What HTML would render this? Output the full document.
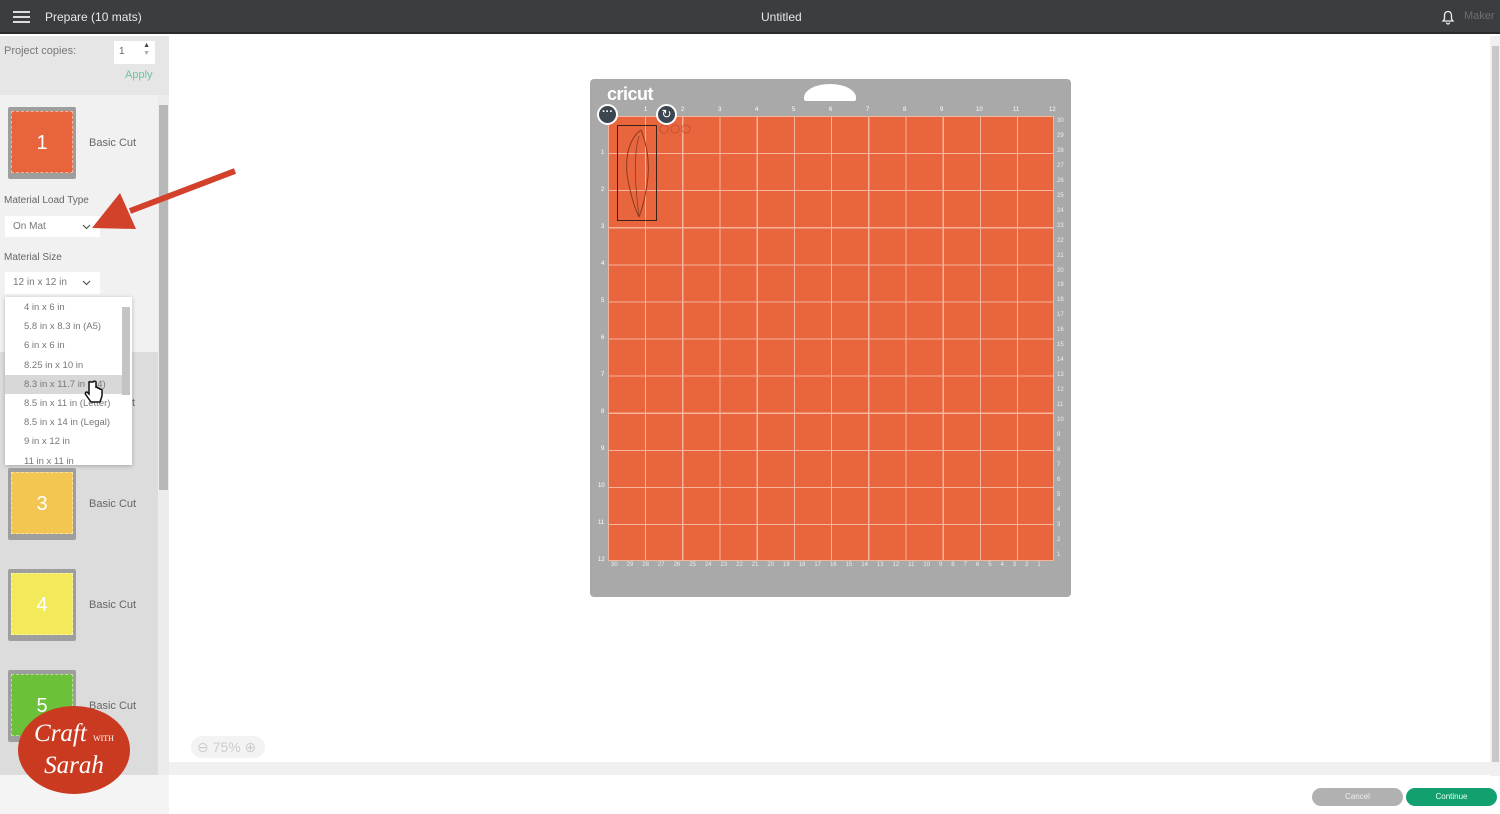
<!DOCTYPE html>
<html><head><meta charset="utf-8"><style>
*{margin:0;padding:0;box-sizing:border-box}
body{width:1500px;height:814px;overflow:hidden;background:#fff;font-family:"Liberation Sans",sans-serif;position:relative}
.abs{position:absolute}
.top{left:0;top:0;width:1500px;height:34px;background:#3b3d40;border-bottom:2px solid #2a2b2d}
.t{color:#e8e8e8;font-size:12px}
.side{left:0;top:36px;width:169px;height:739px;background:#dcdcdc}
.lbl{font-size:10px;color:#666}
.mat{width:68px;height:72px;background:#9e9e9e;border-radius:2px}
.mat .in{position:absolute;left:3px;top:4px;right:3px;bottom:6px;color:#fff;font-size:20px;text-align:center;line-height:62px;border:1px dashed rgba(255,255,255,.5)}
.bc{font-size:11px;color:#666}
.dd{background:#fff;font-size:9.5px;color:#777}
.dd .o{height:19.2px;line-height:19px;padding-left:19px}
.grid{left:608px;top:116px;width:446px;height:445px;background-color:#e8653d;
background-image:repeating-linear-gradient(90deg,transparent 0 36px,#f6b49c 36px 37.2px),repeating-linear-gradient(180deg,transparent 0 36px,#f6b49c 36px 37.1px);border:1px solid #f6b49c}
.num{font-size:6px;color:#fff;white-space:nowrap}
.row{display:flex;justify-content:space-between}
</style></head><body>
<div class="abs top">
 <div class="abs" style="left:13px;top:11px;width:17px;height:2px;background:#ddd;box-shadow:0 5px 0 #ddd,0 10px 0 #ddd"></div>
 <div class="abs t" style="left:45px;top:10px">Prepare (10 mats)</div>
 <div class="abs t" style="left:761px;top:10px">Untitled</div>
 <svg class="abs" style="left:1441px;top:10px" width="14" height="15" viewBox="0 0 14 15"><path d="M7 1.5C4.5 1.5 3.5 3.5 3.5 6v3L2 11h10l-1.5-2V6C10.5 3.5 9.5 1.5 7 1.5zM5.5 12.5a1.5 1.5 0 0 0 3 0" fill="none" stroke="#eee" stroke-width="1.3"/></svg>
 <div class="abs" style="left:1464px;top:10px;font-size:11px;color:#6d6f72">Maker</div>
</div>
<div class="abs side"></div>
<div class="abs" style="left:0;top:36px;width:169px;height:59px;background:#e6e6e6"></div>
<div class="abs lbl" style="left:4px;top:45px;font-size:11px;color:#777">Project copies:</div>
<div class="abs" style="left:114px;top:41px;width:41px;height:23px;background:#fff;font-size:10px;color:#666;padding:5px 5px">1<span style="position:absolute;right:5px;top:1px;font-size:7px;line-height:8px;color:#444">▲<br><span style="color:#aaa">▼</span></span></div>
<div class="abs" style="left:125px;top:69px;font-size:11px;color:#6fc3a0">Apply</div>
<div class="abs" style="left:0;top:95px;width:158px;height:257px;background:#f1f1f1"></div>
<div class="abs" style="left:158px;top:95px;width:11px;height:680px;background:#ececec"></div>
<div class="abs" style="left:159px;top:105px;width:9px;height:385px;background:#b8b8b8"></div>
<div class="abs mat" style="left:8px;top:107px"><div class="in" style="background:#e8643c">1</div></div>
<div class="abs bc" style="left:89px;top:137px">Basic Cut</div>
<div class="abs lbl" style="left:4px;top:195px">Material Load Type</div>
<div class="abs dd" style="left:5px;top:216px;width:95px;height:21px;padding:5px 8px;font-size:10px">On Mat<svg style="position:absolute;right:9px;top:8px" width="9" height="6" viewBox="0 0 9 6"><path d="M1 1l3.5 3.5L8 1" fill="none" stroke="#555" stroke-width="1.2"/></svg></div>
<div class="abs lbl" style="left:4px;top:252px">Material Size</div>
<div class="abs dd" style="left:5px;top:272px;width:95px;height:22px;padding:5px 8px;font-size:10px">12 in x 12 in<svg style="position:absolute;right:9px;top:8px" width="9" height="6" viewBox="0 0 9 6"><path d="M1 1l3.5 3.5L8 1" fill="none" stroke="#555" stroke-width="1.2"/></svg></div>
<div class="abs dd" style="left:5px;top:297px;width:127px;height:168px;box-shadow:0 1px 4px rgba(0,0,0,.25);padding-top:1px;overflow:hidden">
 <div class="o">4 in x 6 in</div><div class="o">5.8 in x 8.3 in (A5)</div><div class="o">6 in x 6 in</div><div class="o">8.25 in x 10 in</div>
 <div class="o" style="background:#d8d8d8;margin-right:10px">8.3 in x 11.7 in (A4)</div><div class="o">8.5 in x 11 in (Letter)</div><div class="o">8.5 in x 14 in (Legal)</div><div class="o">9 in x 12 in</div><div class="o">11 in x 11 in</div>
 <span class="abs" style="left:117px;top:10px;width:8px;height:88px;background:#c4c4c4"></span>
</div>
<svg class="abs" style="left:84px;top:380px" width="20" height="26" viewBox="0 0 20 26"><path d="M5 2v12l-2-2c-2 0-2 2-1 3l5 7h9l2-6v-6c0-1-2-1-2 0v-1c0-1-2-1-2 0v-1c0-1-2-1-2 0V2c0-1-3-1-3 0z" fill="#fff" stroke="#111" stroke-width="1.5"/></svg>
<div class="abs bc" style="left:132px;top:397px">t</div>
<div class="abs mat" style="left:8px;top:468px"><div class="in" style="background:#f2c650">3</div></div>
<div class="abs bc" style="left:89px;top:498px">Basic Cut</div>
<div class="abs mat" style="left:8px;top:569px"><div class="in" style="background:#f2ea5a">4</div></div>
<div class="abs bc" style="left:89px;top:599px">Basic Cut</div>
<div class="abs mat" style="left:8px;top:670px"><div class="in" style="background:#6cc03a">5</div></div>
<div class="abs bc" style="left:89px;top:700px">Basic Cut</div>
<svg class="abs" style="left:90px;top:165px" width="150" height="70" viewBox="0 0 150 70"><line x1="145" y1="6" x2="40" y2="46" stroke="#d2412a" stroke-width="6"/><polygon points="2,63 30,28 46,64" fill="#d2412a"/></svg>
<div class="abs" style="left:0;top:775px;width:169px;height:39px;background:#f4f4f4"></div>
<div class="abs" style="left:18px;top:706px;width:112px;height:88px;border-radius:50%;background:#c93a20;color:#fff;font-family:'Liberation Serif',serif;font-style:italic;text-align:center;font-size:25px;line-height:27px;padding-top:14px;z-index:5">Craft <span style="font-size:8px;font-style:normal">WITH</span><br>Sarah</div>
<div class="abs" style="left:169px;top:762px;width:1321px;height:13px;background:#f0f0f0"></div>
<div class="abs" style="left:1490px;top:36px;width:10px;height:740px;background:#f0f0f0"></div>
<div class="abs" style="left:1492px;top:46px;width:7px;height:716px;background:#c8c8c8"></div>
<div class="abs" style="left:191px;top:736px;width:74px;height:22px;border-radius:11px;background:#f3f3f3;font-size:14px;color:#ccc;padding:3px 6px">⊖ 75% ⊕</div>
<!-- mat -->
<div class="abs" style="left:590px;top:79px;width:481px;height:518px;background:#a9a9a9;border-radius:4px"></div>
<div class="abs" style="left:804px;top:84px;width:52px;height:17px;background:#fff;border-radius:50% 50% 2px 2px/80% 80% 2px 2px"></div>
<div class="abs" style="left:607px;top:84px;color:#fff;font-size:18px;font-weight:bold;letter-spacing:-0.5px">cricut</div>
<div class="abs grid"></div>
<div class="abs" style="left:617px;top:125px;width:40px;height:96px;border:1.5px solid #3a2418"></div>
<svg class="abs" style="left:617px;top:126px" width="40" height="95" viewBox="0 0 40 95"><path d="M24 4c-12 8-18 30-12 55 3 14 6 24 10 32M24 4c4 10 10 30 6 55-2 12-4 22-8 32" fill="none" stroke="#8a3a22" stroke-width="1"/><path d="M22 10c-6 20-4 50 0 80" fill="none" stroke="#8a3a22" stroke-width="0.8"/></svg>
<div class="abs" style="left:659px;top:124px;width:32px;height:10px;background:radial-gradient(circle at 5px 5px,transparent 3.5px,#b34a2a 4px,transparent 4.8px) 0 0/11px 10px repeat-x"></div>
<div class="abs" style="left:597px;top:104px;width:21px;height:21px;border-radius:50%;background:#3c4650;border:2px solid #fff;color:#fff;font-size:11px;text-align:center;line-height:12px;font-weight:bold">···</div>
<div class="abs" style="left:656px;top:104px;width:21px;height:21px;border-radius:50%;background:#3c4650;border:2px solid #fff;color:#fff;font-size:12px;text-align:center;line-height:17px">↻</div>
<div class="abs num" style="left:644px;top:107px">1</div><div class="abs num" style="left:681px;top:107px">2</div><div class="abs num" style="left:718px;top:107px">3</div><div class="abs num" style="left:755px;top:107px">4</div><div class="abs num" style="left:792px;top:107px">5</div><div class="abs num" style="left:829px;top:107px">6</div><div class="abs num" style="left:866px;top:107px">7</div><div class="abs num" style="left:903px;top:107px">8</div><div class="abs num" style="left:940px;top:107px">9</div><div class="abs num" style="left:976px;top:107px">10</div><div class="abs num" style="left:1013px;top:107px">11</div><div class="abs num" style="left:1049px;top:107px">12</div>
<div class="abs num" style="left:601px;top:150px">1</div><div class="abs num" style="left:601px;top:187px">2</div><div class="abs num" style="left:601px;top:224px">3</div><div class="abs num" style="left:601px;top:261px">4</div><div class="abs num" style="left:601px;top:298px">5</div><div class="abs num" style="left:601px;top:335px">6</div><div class="abs num" style="left:601px;top:372px">7</div><div class="abs num" style="left:601px;top:409px">8</div><div class="abs num" style="left:601px;top:446px">9</div><div class="abs num" style="left:598px;top:483px">10</div><div class="abs num" style="left:598px;top:520px">11</div><div class="abs num" style="left:598px;top:557px">12</div>
<div class="abs num row" style="left:611px;top:562px;width:430px;color:#eee"><span>30</span><span>29</span><span>28</span><span>27</span><span>26</span><span>25</span><span>24</span><span>23</span><span>22</span><span>21</span><span>20</span><span>19</span><span>18</span><span>17</span><span>16</span><span>15</span><span>14</span><span>13</span><span>12</span><span>11</span><span>10</span><span>9</span><span>8</span><span>7</span><span>6</span><span>5</span><span>4</span><span>3</span><span>2</span><span>1</span></div>
<div class="abs num" style="left:1057px;top:118px;width:8px;height:440px;display:flex;flex-direction:column;justify-content:space-between;color:#eee"><span>30</span><span>29</span><span>28</span><span>27</span><span>26</span><span>25</span><span>24</span><span>23</span><span>22</span><span>21</span><span>20</span><span>19</span><span>18</span><span>17</span><span>16</span><span>15</span><span>14</span><span>13</span><span>12</span><span>11</span><span>10</span><span>9</span><span>8</span><span>7</span><span>6</span><span>5</span><span>4</span><span>3</span><span>2</span><span>1</span></div>
<!-- bottom buttons -->
<div class="abs" style="left:1312px;top:788px;width:91px;height:18px;border-radius:9px;background:#b1b1b1;color:#eee;font-size:8px;text-align:center;line-height:18px">Cancel</div>
<div class="abs" style="left:1406px;top:788px;width:91px;height:18px;border-radius:9px;background:#12a06e;color:#e8fff4;font-size:8px;text-align:center;line-height:18px">Continue</div>
</body></html>
